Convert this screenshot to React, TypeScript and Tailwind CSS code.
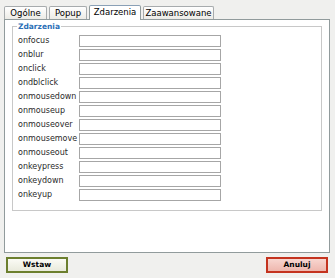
const events = [
  "onfocus",
  "onblur",
  "onclick",
  "ondblclick",
  "onmousedown",
  "onmouseup",
  "onmouseover",
  "onmousemove",
  "onmouseout",
  "onkeypress",
  "onkeydown",
  "onkeyup",
];

const tabs = [
  { label: "Ogólne", w: "w-[43px]" },
  { label: "Popup", w: "w-[38px]" },
  { label: "Zdarzenia", w: "w-[52px]" },
  { label: "Zaawansowane", w: "w-[71px]" },
];

const App = () => {
  return (
    <div className="w-[335px] h-[278px] bg-[#f0f0ee] flex flex-col font-['DejaVu_Sans',sans-serif] text-[8px] text-black overflow-hidden">
      {/* tabs */}
      <div className="flex items-end gap-[2px] pl-[4px] pt-[4px] h-[19px] relative z-10 text-[8.5px]">
        {tabs.map((t) => {
          const active = t.label === "Zdarzenia";
          return active ? (
            <div
              key={t.label}
              className={`${t.w} h-[15px] flex items-center justify-center border border-b-0 border-[#919b9c] border-t-[#8aa0b6] rounded-t-[2px] bg-white mb-[-1px] pb-[1px]`}
            >
              {t.label}
            </div>
          ) : (
            <div
              key={t.label}
              className={`${t.w} h-[13px] flex items-center justify-center border border-b-0 border-[#a7abad] rounded-t-[2px] bg-gradient-to-b from-white to-[#ecebe6]`}
            >
              {t.label}
            </div>
          );
        })}
      </div>

      {/* panel */}
      <div className="ml-[4px] mr-[5px] h-[234px] bg-white border border-[#919b9c] px-[7px] pt-[1px]">
        <fieldset className="border border-[#c8c8c8] px-[5px] pb-[9px] w-[310px]">
          <legend className="px-[1px] ml-[-1px] text-[#2b6fb6] font-bold text-[7.5px]">Zdarzenia</legend>
          <div className="flex flex-col gap-[2px] pt-[3px]">
            {events.map((e) => (
              <div key={e} className="flex items-center h-[12px]">
                <span className="w-[61px] text-[#2a2a2a]">{e}</span>
                <div className="w-[142px] h-[12px] border border-[#a6a6a6] bg-white" />
              </div>
            ))}
          </div>
        </fieldset>
      </div>

      {/* buttons */}
      <div className="flex justify-between pl-[6px] pr-[7px] pt-[4px]">
        <button className="w-[62px] h-[16px] border-2 border-[#6c7f2e] bg-gradient-to-b from-[#fbfbf5] to-[#e9eadc] font-bold text-[7.5px] text-black">
          Wstaw
        </button>
        <button className="w-[62px] h-[16px] border-2 border-[#c4331f] bg-gradient-to-b from-[#f8d6d0] to-[#eeb7ae] font-bold text-[7.5px] text-black">
          Anuluj
        </button>
      </div>
    </div>
  );
};

export default App;
